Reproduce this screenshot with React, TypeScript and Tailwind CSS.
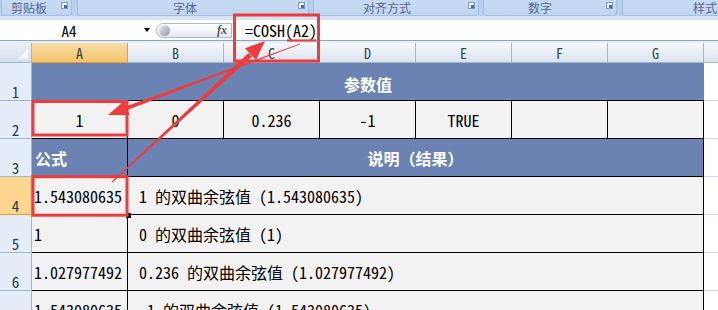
import React from "react";

const MONO = "font-['Noto_Sans_Mono_CJK_SC','Liberation_Mono','Noto_Sans_CJK_SC',monospace]";

function Launcher() {
  return (
    <div className="w-[7px] h-[7px] border border-[#7D9AC4] bg-[#EEF4FB] flex items-end justify-end">
      <div className="w-[3px] h-[3px] bg-[#4D6A99]" />
    </div>
  );
}

function Group({ w, label, labelPad, launcherRight = true }: { w: string; label: string; labelPad: string; launcherRight?: boolean }) {
  return (
    <div className={`${w} h-[16px] shrink-0 rounded-b-[4px] border border-t-0 border-[#A3BEE0] bg-gradient-to-b from-[#C6DAF2] to-[#C0D6F0] flex items-center relative`}>
      <div className={`${labelPad} text-[12px] leading-[15px] text-[#55698F] font-['Noto_Sans_CJK_SC',sans-serif] whitespace-nowrap`}>{label}</div>
      {launcherRight && (
        <div className="absolute right-[3px] top-[2px]">
          <Launcher />
        </div>
      )}
    </div>
  );
}

const cols = ["A", "B", "C", "D", "E", "F", "G"];

function RowHeader({ n, selected = false }: { n: number; selected?: boolean }) {
  return (
    <div
      className={`h-[38px] border-r border-b flex items-end justify-center pb-[1px] text-[15px] leading-[15px] ${MONO} ${
        selected ? "bg-[#FCD68E] border-[#F29536] text-[#203D5E]" : "bg-[#E4ECF7] border-[#9EB6CE] text-[#203D5E]"
      }`}
    >
      {n}
    </div>
  );
}

const cell = `h-[38px] border-r border-b border-black bg-[#F2F2F2] text-[16px] leading-[16px] text-black ${MONO} flex items-center whitespace-nowrap overflow-hidden`;
const blue = `h-[38px] bg-[#6B83B3] text-white font-bold text-[16px] leading-[16px] font-['Noto_Sans_CJK_SC',sans-serif] flex items-center whitespace-nowrap`;
const rest = "h-[38px] border-b border-[#D0D7E5] bg-white";

export default function App() {
  const dataRows = [
    { n: 4, a: "1.543080635", b: " 1 的双曲余弦值 (1.543080635)", sel: true },
    { n: 5, a: "1", b: " 0 的双曲余弦值 (1)" },
    { n: 6, a: "1.027977492", b: " 0.236 的双曲余弦值 (1.027977492)" },
    { n: 7, a: "1.543080635", b: " -1 的双曲余弦值 (1.543080635)" },
  ];
  return (
    <div className="w-[718px] h-[310px] overflow-hidden relative bg-white">
      {/* Ribbon group labels */}
      <div className="h-[16px] bg-[#B9D0EC] flex pl-[1px]">
        <Group w="w-[71px]" label="剪贴板" labelPad="pl-[9px]" />
        <div className="w-[5px] shrink-0" />
        <Group w="w-[232px]" label="字体" labelPad="pl-[95px]" />
        <div className="w-[4px] shrink-0" />
        <Group w="w-[166px]" label="对齐方式" labelPad="pl-[49px]" />
        <div className="w-[4px] shrink-0" />
        <Group w="w-[134px]" label="数字" labelPad="pl-[44px]" />
        <div className="w-[5px] shrink-0" />
        <Group w="w-[98px]" label="样式" labelPad="pl-[70px]" launcherRight={false} />
      </div>
      <div className="h-[4px] bg-[#D5E3F4]" />
      {/* Formula bar */}
      <div className="h-[21px] bg-white border-b border-[#8AA6CC] flex items-center">
        <div className={`w-[138px] text-center text-[15px] leading-[15px] text-black ${MONO}`}>A4</div>
        <div className="w-[18px] flex justify-center">
          <div className="w-0 h-0 border-l-[3.5px] border-r-[3.5px] border-t-[4px] border-l-transparent border-r-transparent border-t-black" />
        </div>
        <div className="w-[76px] h-[15px] rounded-l-full border border-[#A9B9CE] bg-gradient-to-b from-white to-[#E3E9F1] flex items-center justify-between pl-[2px] pr-[4px]">
          <div className="w-[11px] h-[11px] rounded-full bg-gradient-to-br from-[#F4F6F9] via-[#B5BECB] to-[#8F9BAC]" />
          <div className="text-[12px] leading-[12px] italic font-bold text-[#555] font-['Liberation_Serif',serif]">fx</div>
        </div>
        <div className={`pl-[13px] text-[16px] leading-[16px] text-black ${MONO}`}>=COSH(A2)</div>
      </div>
      <div className="h-[2px] bg-[#E9EFF7]" />
      {/* Sheet */}
      <div className="grid grid-cols-[32px_repeat(7,96px)_1fr]">
        {/* column headers */}
        <div className="h-[20px] bg-gradient-to-b from-[#E9EFF8] to-[#D5DFEC] border-r border-b border-[#9EB6CE] relative">
          <div className="absolute right-[3px] bottom-[3px] w-0 h-0 border-l-[10px] border-t-[10px] border-l-transparent border-t-transparent border-r-0 border-b-0 [border-bottom:10px_solid_#F4F7FB]" />
        </div>
        {cols.map((c, i) => (
          <div
            key={c}
            className={`h-[20px] border-r border-b flex items-center justify-center text-[14px] leading-[14px] ${MONO} ${
              i === 0
                ? "bg-gradient-to-b from-[#F9DDA6] to-[#F2C468] border-r-[#F29536] border-b-[#F29536] text-[#2B3E52]"
                : "bg-gradient-to-b from-[#F7F9FC] to-[#DBE3EE] border-[#9EB6CE] text-[#2B4A5E]"
            }`}
          >
            {c}
          </div>
        ))}
        <div className="h-[20px] bg-gradient-to-b from-[#F7F9FC] to-[#DBE3EE] border-b border-[#9EB6CE]" />

        {/* Row 1 */}
        <RowHeader n={1} />
        <div className={`${blue} col-span-7 justify-center border-b border-black pt-[4px]`}>参数值</div>
        <div className={rest} />

        {/* Row 2 */}
        <RowHeader n={2} />
        {["1", "0", "0.236", "-1", "TRUE", "", ""].map((v, i) => (
          <div key={i} className={`${cell} justify-center`}>
            {v}
          </div>
        ))}
        <div className={rest} />

        {/* Row 3 */}
        <RowHeader n={3} />
        <div className={`${blue} border-r border-b border-black pl-[3px]`}>公式</div>
        <div className={`${blue} col-span-6 border-r border-b border-black justify-center`}>说明（结果）</div>
        <div className={rest} />

        {dataRows.map((r) => (
          <React.Fragment key={r.n}>
            <RowHeader n={r.n} selected={r.sel} />
            <div className={`${cell} pl-[2px]`}>{r.a}</div>
            <div className={`${cell} col-span-6 pl-[3px] whitespace-pre`}>{r.b}</div>
            <div className={rest} />
          </React.Fragment>
        ))}
      </div>

      {/* Annotations overlay */}
      <svg className="absolute left-0 top-0 pointer-events-none" width="718" height="310" viewBox="0 0 718 310">
        <rect x="126" y="213" width="5" height="5" fill="#000" />
        <g fill="none" stroke="#EE3B3B" strokeWidth="3">
          <rect x="234.5" y="15" width="84" height="46" />
          <rect x="33" y="101.5" width="94" height="33.5" />
          <rect x="33" y="176.7" width="94" height="38.5" />
        </g>
        <line x1="287" y1="40.5" x2="316" y2="40.5" stroke="#EE3B3B" strokeWidth="2.2" />
        <polygon points="300.2,43.5 299.8,44.5 125.9,110.4 127.6,105.7" fill="#EE3B3B" />
        <polygon points="108,115 129.6,115.0 124.2,101.0" fill="#EE3B3B" />
        <polygon points="111.6,181.6 112.4,182.4 252.2,56.3 248.5,52.9" fill="#EE3B3B" />
        <polygon points="265,41 256.0,60.0 245.0,48.2" fill="#EE3B3B" />
      </svg>
    </div>
  );
}
